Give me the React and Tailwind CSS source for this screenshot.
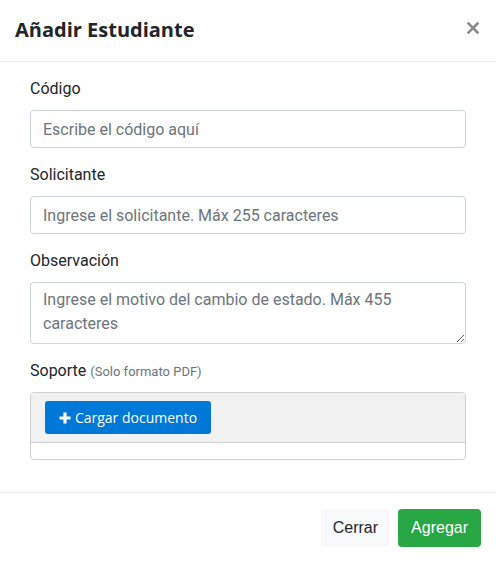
import React from "react";

const Field = ({ label, children }) => (
  <div className="flex flex-col">
    <label className="text-[16px] leading-[22px] text-[#212529] mb-[10px]">{label}</label>
    {children}
  </div>
);

export default function App() {
  return (
    <div className="w-[496px] h-[563px] bg-white flex flex-col" style={{ fontFamily: "Roboto, sans-serif" }}>
      {/* header */}
      <div className="h-[62px] shrink-0 flex items-center justify-between pl-[15px] pr-[16px] border-b border-[#e9ecef]">
        <h3 className="text-[20px] font-bold text-[#212529] font-['Open_Sans',sans-serif] pb-[2px]">
          Añadir Estudiante
        </h3>
        <button type="button" className="w-[14px] h-[14px] flex items-center justify-center mb-[6px]">
          <svg width="12" height="12" viewBox="0 0 12 12">
            <path d="M1.5 1.5 L10.5 10.5 M10.5 1.5 L1.5 10.5" stroke="#8a8a8a" strokeWidth="2.6" strokeLinecap="square" />
          </svg>
        </button>
      </div>

      {/* body */}
      <div className="flex flex-col gap-[16px] px-[30px] pt-[16px] pb-[32px]">
        <Field label="Código">
          <input
            type="text"
            placeholder="Escribe el código aquí"
            className="h-[38px] w-full rounded-[4px] border border-[#ced4da] px-[12px] text-[16px] text-[#495057] placeholder:text-[#6c757d] outline-none"
          />
        </Field>
        <Field label="Solicitante">
          <input
            type="text"
            placeholder="Ingrese el solicitante. Máx 255 caracteres"
            className="h-[38px] w-full rounded-[4px] border border-[#ced4da] px-[12px] text-[16px] text-[#495057] placeholder:text-[#6c757d] outline-none"
          />
        </Field>
        <Field label="Observación">
          <textarea
            placeholder="Ingrese el motivo del cambio de estado. Máx 455 caracteres"
            className="h-[62px] w-full rounded-[4px] border border-[#ced4da] px-[12px] py-[5px] text-[16px] leading-[24px] text-[#495057] placeholder:text-[#6c757d] outline-none"
          />
        </Field>
        <div className="flex flex-col">
          <div className="text-[16px] leading-[22px] text-[#212529] mb-[9px]">
            Soporte <span className="text-[13px] text-[#6c757d]">(Solo formato PDF)</span>
          </div>
          <div className="rounded-[4px] border border-[#cfcfcf] overflow-hidden">
            <div className="h-[50px] bg-[#f2f2f2] border-b border-[#cfcfcf] px-[14px] pt-[8px]">
              <button
                type="button"
                className="h-[33px] w-[166px] rounded-[3px] bg-[#0078d7] text-white text-[14px] font-['Open_Sans',sans-serif] flex items-center justify-center gap-[4px]"
              >
                <svg width="12" height="12" viewBox="0 0 12 12">
                  <path d="M6 0.5 V11.5 M0.5 6 H11.5" stroke="white" strokeWidth="3.2" />
                </svg>
                Cargar documento
              </button>
            </div>
            <div className="h-[16px]"></div>
          </div>
        </div>
      </div>

      {/* footer */}
      <div className="border-t border-[#e9ecef] flex justify-end items-center gap-[8px] pr-[15px] pt-[16px]">
        <button
          type="button"
          className="h-[38px] px-[12px] rounded-[4px] bg-[#f8f9fa] text-[#212529] text-[16px] font-['Liberation_Sans',Arial,sans-serif]"
        >
          Cerrar
        </button>
        <button
          type="button"
          className="h-[38px] px-[13px] rounded-[4px] bg-[#28a745] text-white text-[16px] font-['Liberation_Sans',Arial,sans-serif]"
        >
          Agregar
        </button>
      </div>
    </div>
  );
}
